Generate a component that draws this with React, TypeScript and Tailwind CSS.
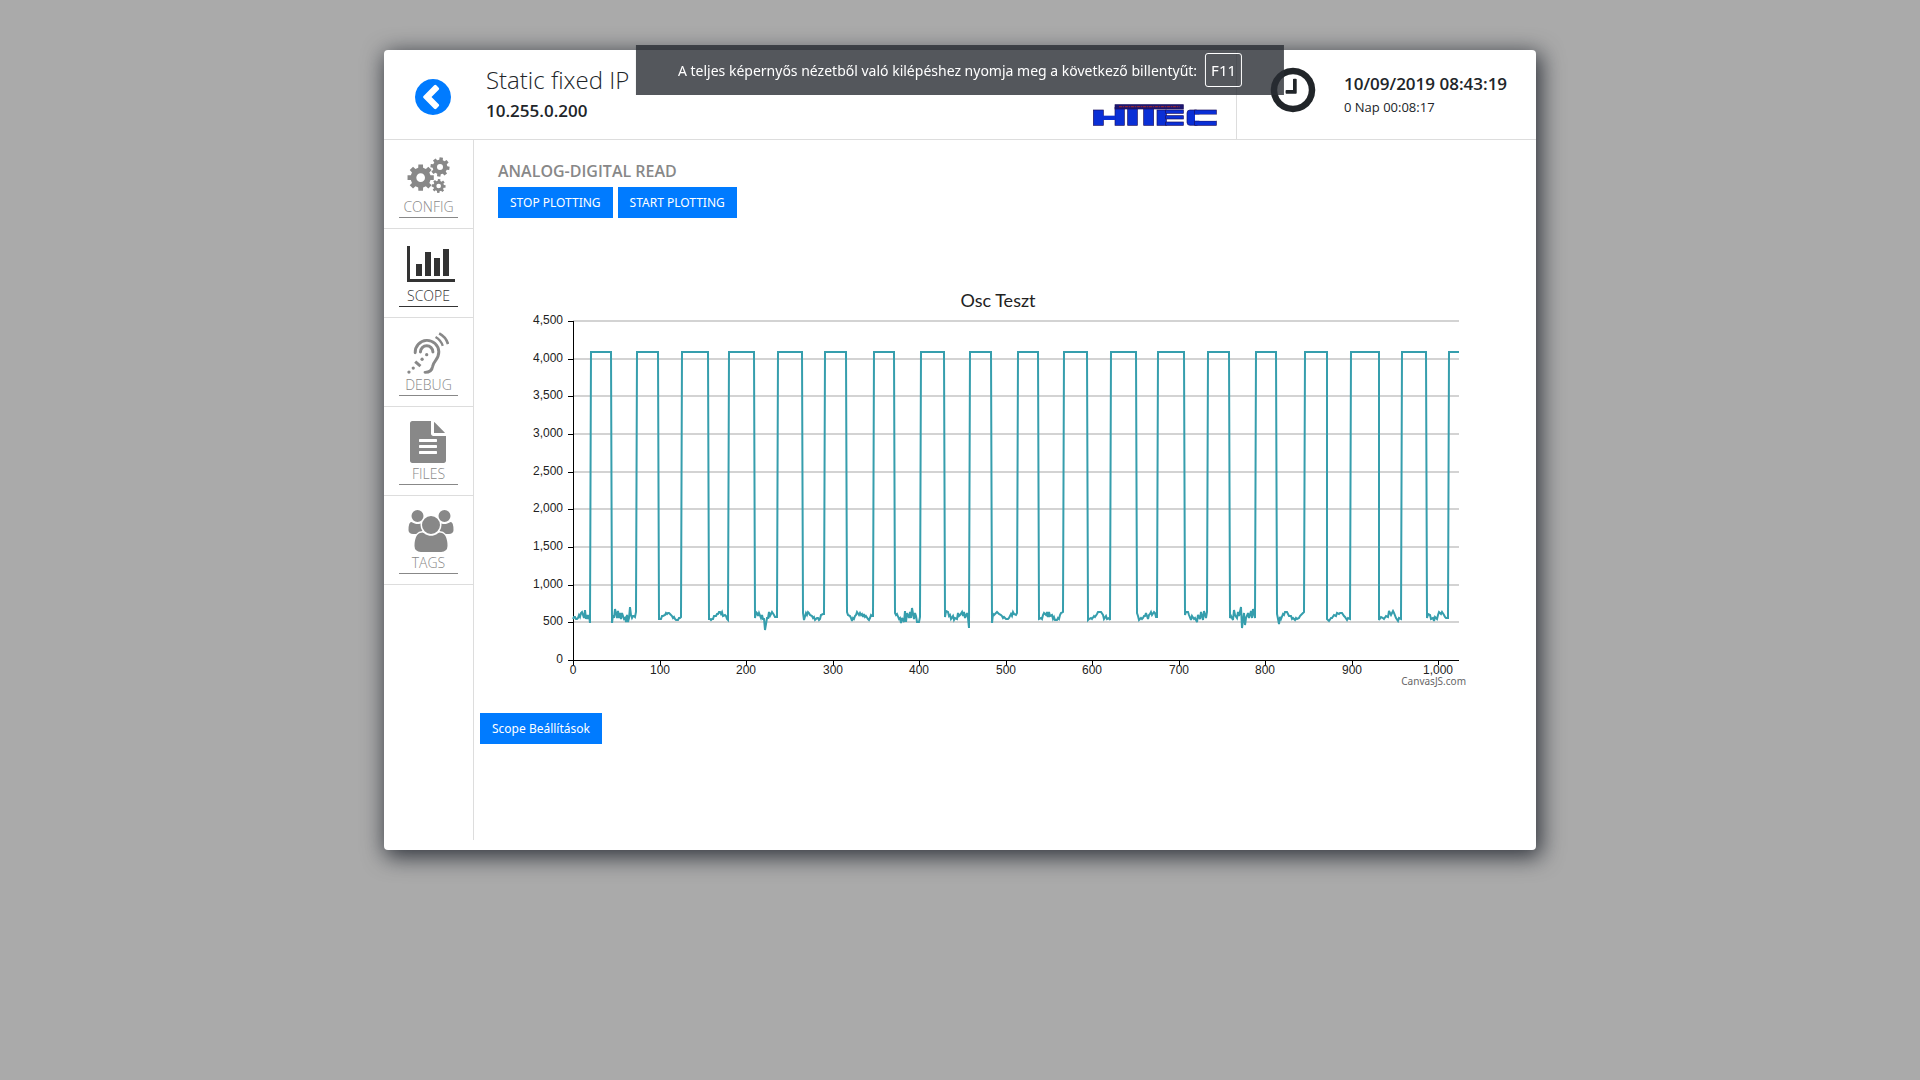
import React from "react";

type GlyphProps = { d: string; width: number; className?: string };

function Glyph({ d, width, className }: GlyphProps) {
  return (
    <svg viewBox={`0 0 ${width} 1792`} className={className} fill="currentColor" aria-hidden="true">
      <path d={d} />
    </svg>
  );
}

const CHEVRON_CIRCLE =
  "M1037 1395l102-102q19-19 19-45t-19-45l-307-307 307-307q19-19 19-45t-19-45l-102-102q-19-19-45-19t-45 19l-454 454q-19 19-19 45t19 45l454 454q19 19 45 19t45-19zm627-499q0 209-103 385.5t-279.5 279.5-385.5 103-385.5-103-279.5-279.5-103-385.5 103-385.5 279.5-279.5 385.5-103 385.5 103 279.5 279.5 103 385.5z";
const CLOCK =
  "M1024 544v448q0 14-9 23t-23 9h-320q-14 0-23-9t-9-23v-64q0-14 9-23t23-9h224v-352q0-14 9-23t23-9h64q14 0 23 9t9 23zm416 352q0-148-73-273t-198-198-273-73-273 73-198 198-73 273 73 273 198 198 273 73 273-73 198-198 73-273zm224 0q0 209-103 385.5t-279.5 279.5-385.5 103-385.5-103-279.5-279.5-103-385.5 103-385.5 279.5-279.5 385.5-103 385.5 103 279.5 279.5 103 385.5z";
const BAR_CHART =
  "M640 896v512h-256v-512h256zm384-512v1024h-256v-1024h256zm1024 1152v128h-2048v-1536h128v1408h1920zm-640-896v768h-256v-768h256zm384-384v1152h-256v-1152h256z";
const FILE_TEXT =
  "M1596 476q14 14 28 36h-472v-472q22 14 36 28zm-476 164h544v1056q0 40-28 68t-68 28h-1344q-40 0-68-28t-28-68v-1600q0-40 28-68t68-28h800v544q0 40 28 68t68 28zm160 736v-64q0-14-9-23t-23-9h-704q-14 0-23 9t-9 23v64q0 14 9 23t23 9h704q14 0 23-9t9-23zm0-256v-64q0-14-9-23t-23-9h-704q-14 0-23 9t-9 23v64q0 14 9 23t23 9h704q14 0 23-9t9-23zm0-256v-64q0-14-9-23t-23-9h-704q-14 0-23 9t-9 23v64q0 14 9 23t23 9h704q14 0 23-9t9-23z";
const USERS =
  "M657 896q-162 5-265 128h-134q-82 0-138-40.5t-56-118.5q0-353 124-353 6 0 43.5 21t97.5 42.5 119 21.5q67 0 133-23-5 37-5 66 0 139 81 256zm1071 637q0 120-73 189.5t-194 69.5h-874q-121 0-194-69.5t-73-189.5q0-53 3.5-103.5t14-109 26.5-108.5 43-97.5 62-81 85.5-53.5 111.5-20q10 0 43 21.5t73 48 107 48 135 21.5 135-21.5 107-48 73-48 43-21.5q61 0 111.5 20t85.5 53.5 62 81 43 97.5 26.5 108.5 14 109 3.5 103.5zm-1024-1277q0 106-75 181t-181 75-181-75-75-181 75-181 181-75 181 75 75 181zm704 384q0 159-112.5 271.5t-271.5 112.5-271.5-112.5-112.5-271.5 112.5-271.5 271.5-112.5 271.5 112.5 112.5 271.5zm576 225q0 78-56 118.5t-138 40.5h-134q-103-123-265-128 81-117 81-256 0-29-5-66 66 23 133 23 59 0 119-21.5t97.5-42.5 43.5-21q124 0 124 353zm-128-609q0 106-75 181t-181 75-181-75-75-181 75-181 181-75 181 75 75 181z";

/* Outline of an eight-toothed gear with a round hole. */
function gearPath(cx: number, cy: number, r: number, hole: number, turn: number) {
  const at = (radius: number, deg: number) => {
    const a = ((deg + turn) * Math.PI) / 180;
    return `${(cx + radius * Math.cos(a)).toFixed(2)} ${(cy + radius * Math.sin(a)).toFixed(2)}`;
  };
  const corners: string[] = [];
  for (let t = 0; t < 8; t++) {
    const mid = t * 45;
    corners.push(at(r * 0.76, mid - 14), at(r, mid - 10), at(r, mid + 10), at(r * 0.76, mid + 14));
  }
  return `M${corners.join("L")}ZM${cx - hole} ${cy}a${hole} ${hole} 0 1 0 ${hole * 2} 0a${hole} ${hole} 0 1 0 ${-hole * 2} 0Z`;
}

function GearsIcon() {
  return (
    <svg viewBox="0 -10 132 126" className="h-[42px] w-11" fill="currentColor" fillRule="evenodd" aria-hidden="true">
      <path d={gearPath(41, 61, 40, 13, 0)} />
      <path d={gearPath(99, 29, 29, 9, 8)} />
      <path d={gearPath(95, 86, 21, 7, 4)} />
    </svg>
  );
}

function ListeningIcon() {
  return (
    <svg viewBox="0 0 128 128" className="size-[42px]" fill="none" stroke="currentColor" strokeWidth="9" aria-hidden="true">
      <path d="M25 63A36 36 0 0 1 97 60C97 85 80 88 78 105C76 118 68 123 55 123" strokeLinecap="round" />
      <path d="M41 61a19 19 0 0 1 38 0" strokeLinecap="round" />
      <path d="M87 15Q103 24 109 42" strokeWidth="7" />
      <path d="M98 4Q119 15 125 37" strokeWidth="8" />
      <path d="M25 90L41 104" />
      <g fill="currentColor" stroke="none">
        <circle cx="6" cy="122" r="5" />
        <circle cx="19" cy="110" r="5" />
        <circle cx="46" cy="83" r="5" />
        <circle cx="60" cy="69" r="5" />
      </g>
    </svg>
  );
}

const NAV: { label: string; icon: React.ReactNode; active?: boolean }[] = [
  { label: "CONFIG", icon: <GearsIcon /> },
  { label: "SCOPE", icon: <Glyph d={BAR_CHART} width={2048} className="h-[42px] w-12" />, active: true },
  { label: "DEBUG", icon: <ListeningIcon /> },
  { label: "FILES", icon: <Glyph d={FILE_TEXT} width={1792} className="size-[42px]" /> },
  { label: "TAGS", icon: <Glyph d={USERS} width={2048} className="h-[42px] w-12" /> },
];

/* Low-level readings between pulses, and the x position where each pulse rises and falls. */
const HIGH = 4095;
const LOWS: number[][] = [
  [545, 575, 575, 540, 540, 560, 600, 575, 620, 640, 600, 560, 660, 660, 540, 600, 540, 600, 490],
  [490, 600, 560, 680, 620, 560, 650, 560, 620, 540, 620, 540, 560, 510, 600, 510, 560, 700, 600, 560, 590, 580, 575, 640],
  [540, 540, 540, 580, 580, 600, 620, 610, 620, 620, 610, 590, 560, 570, 550, 530, 530, 560, 560, 575],
  [550, 550, 530, 550, 545, 590, 580, 610, 610, 635, 640, 610, 640, 590, 600, 580, 550, 530],
  [560, 640, 630, 590, 620, 560, 600, 540, 540, 400, 560, 560, 640, 590, 610, 640, 600, 575, 575, 575],
  [620, 530, 620, 600, 640, 620, 600, 590, 560, 575, 530, 560, 560, 535, 545, 600, 610, 610],
  [640, 600, 580, 560, 520, 560, 550, 580, 600, 640, 600, 620, 600, 610, 570, 610, 570, 580, 540, 530, 560, 600, 590, 580],
  [620, 600, 610, 540, 560, 490, 560, 500, 650, 500, 620, 560, 640, 560, 690, 540, 620, 590, 500, 500, 575],
  [570, 650, 640, 590, 600, 540, 580, 530, 560, 540, 620, 590, 600, 640, 590, 640, 560, 620, 560, 430],
  [490, 610, 600, 620, 640, 630, 610, 600, 580, 560, 570, 545, 550, 550, 560, 610, 590, 640, 610, 600, 620],
  [540, 560, 550, 600, 630, 600, 640, 570, 640, 580, 600, 540, 570, 530, 530, 560, 550, 600, 630, 640],
  [530, 540, 560, 550, 590, 570, 610, 640, 640, 640, 600, 540, 590, 550, 560, 530],
  [620, 590, 530, 560, 540, 560, 590, 580, 620, 550, 600, 610, 640, 600, 640, 620, 570, 575],
  [600, 640, 640, 600, 530, 590, 540, 560, 500, 600, 540, 640, 530, 650, 560, 640],
  [560, 590, 530, 660, 600, 560, 640, 590, 710, 430, 620, 470, 560, 620, 560, 650, 560, 680, 560],
  [610, 480, 570, 550, 610, 600, 640, 640, 610, 590, 580, 550, 560, 530, 560, 550, 560, 590, 600, 630, 640],
  [550, 520, 560, 560, 600, 580, 630, 610, 630, 620, 580, 570, 530, 560, 550],
  [530, 570, 560, 550, 590, 570, 650, 600, 650, 620, 560, 520, 560, 550],
  [560, 610, 600, 540, 560, 520, 570, 550, 600, 640, 610, 640, 600, 570, 560, 560],
];
const PULSES: [number, number][] = [
  [21, 44], [74, 98], [126, 156], [180, 209], [237, 265], [291, 316], [348, 371], [402, 429], [459, 483],
  [514, 538], [567, 594], [622, 651], [676, 706], [734, 758], [789, 813], [846, 871], [899, 931], [958, 986], [1012, 1024],
];

/* Plot area inside the drawing: x 63..949, y 41..380. */
const px = (v: number) => 63 + (v * 886) / 1024;
const py = (v: number) => 380 - (v * 339) / 4500;

function tracePoints() {
  const points: string[] = [];
  let start = 0;
  const add = (x: number, y: number) => points.push(`${Math.round(px(x))},${Math.round(py(y))}`);
  LOWS.forEach((readings, i) => {
    const [rise, fall] = PULSES[i];
    const end = rise - 1;
    readings.forEach((reading, j) => add(start + ((end - start) * j) / (readings.length - 1), reading));
    add(rise, HIGH);
    add(fall, HIGH);
    start = fall + 1;
  });
  return points.join(" ");
}

function ScopeChart() {
  const levels = [0, 500, 1000, 1500, 2000, 2500, 3000, 3500, 4000, 4500];
  const samples = [0, 100, 200, 300, 400, 500, 600, 700, 800, 900, 1000];
  return (
    <svg viewBox="0 0 976 413" className="block w-full" role="img" aria-label="Osc Teszt">
      <text x="488" y="27" textAnchor="middle" className="fill-[#222] font-['Lato'] text-[18px]">
        Osc Teszt
      </text>
      {levels.map((v) => (
        <g key={v}>
          {v > 0 && <line x1="63" x2="949" y1={Math.round(py(v))} y2={Math.round(py(v))} stroke="#d3d3d3" strokeWidth="2" />}
          <line x1="58" x2="63" y1={Math.round(py(v)) + 0.5} y2={Math.round(py(v)) + 0.5} stroke="#000" />
          <text x="53" y={Math.round(py(v)) + 3} textAnchor="end" className="fill-[#222] font-['Liberation_Sans'] text-[12px]">
            {v.toLocaleString("en-US")}
          </text>
        </g>
      ))}
      {samples.map((v) => (
        <g key={v}>
          <line x1={Math.round(px(v)) + 0.5} x2={Math.round(px(v)) + 0.5} y1="380" y2="385" stroke="#000" />
          <text x={Math.round(px(v))} y="394" textAnchor="middle" className="fill-[#222] font-['Liberation_Sans'] text-[12px]">
            {v.toLocaleString("en-US")}
          </text>
        </g>
      ))}
      <line x1="63.5" x2="63.5" y1="41" y2="380" stroke="#000" />
      <line x1="63" x2="949" y1="380.5" y2="380.5" stroke="#000" />
      <polyline points={tracePoints()} fill="none" stroke="#369ead" strokeWidth="2" strokeLinejoin="miter" strokeMiterlimit="3" />
      <text x="956" y="405" textAnchor="end" className="fill-[#666] font-['Noto_Sans'] text-[10px]">
        CanvasJS.com
      </text>
    </svg>
  );
}

function HitecLogo() {
  return (
    <svg viewBox="0 0 372 66" className="h-[22px] w-[124px]" role="img" aria-label="HITEC">
      <g fill="#0a2fd6" stroke="#1b1060" strokeWidth="2">
        <rect x="1" y="18" width="30" height="46" />
        <rect x="66" y="10" width="28" height="54" />
        <rect x="29" y="35" width="39" height="13" stroke="none" />
        <rect x="104" y="10" width="29" height="54" />
        <rect x="152" y="10" width="30" height="54" />
        <rect x="192" y="18" width="28" height="46" />
        <rect x="218" y="18" width="53" height="10" />
        <rect x="218" y="35" width="53" height="10" />
        <rect x="218" y="54" width="53" height="10" />
        <rect x="282" y="18" width="36" height="46" rx="9" />
        <rect x="305" y="18" width="65" height="13" />
        <rect x="305" y="51" width="65" height="13" />
        <rect x="306" y="32" width="64" height="18" fill="#fff" stroke="none" />
        <rect x="66" y="2" width="205" height="13" fill="#1c1670" />
      </g>
      <line x1="78" x2="260" y1="8" y2="8" stroke="#8c2434" strokeWidth="4" strokeDasharray="9 2 5 2" />
    </svg>
  );
}

const BTN =
  "bg-[#007bff] px-3 pt-px font-['Noto_Sans'] text-[12px] leading-[30px] text-white hover:bg-blue-700";

export default function App() {
  return (
    <div className="min-h-screen bg-[#aaaaaa] pt-[50px] font-['Open_Sans','Noto_Sans',sans-serif] text-[#212529]">
      <div className="mx-auto flex min-h-[800px] w-3/5 flex-col rounded bg-white pb-[10px] shadow-[3px_5px_22px_2px_rgba(10,15,25,0.75)]">
        <header className="flex h-[90px] border-b border-[#dddddd]">
          <button aria-label="Vissza" className="ml-[28px] mt-[5px] w-[42px] text-[#007bff]">
            <Glyph d={CHEVRON_CIRCLE} width={1792} className="size-[42px]" />
          </button>
          <div className="ml-8 mt-[15px]">
            <h1 className="text-[24px] leading-[30px] font-light">Static fixed IP</h1>
            <p className="text-[17px] leading-8 font-semibold">10.255.0.200</p>
          </div>
          <div className="ml-auto flex items-end pr-[19px] pb-[13px]">
            <HitecLogo />
          </div>
          <div className="flex w-[300px] border-l border-[#dddddd]">
            <Glyph d={CLOCK} width={1792} className="mt-[14px] ml-[30px] size-[52px]" />
            <div className="mt-[22px] ml-[25px]">
              <p className="text-[17px] leading-6 font-semibold">10/09/2019 08:43:19</p>
              <p className="text-[13px] leading-[22px]">0 Nap 00:08:17</p>
            </div>
          </div>
        </header>

        <div className="flex flex-1">
          <nav className="w-[90px] shrink-0 border-r border-[#dddddd]">
            {NAV.map((item) => (
              <a
                key={item.label}
                href={`#${item.label.toLowerCase()}`}
                className={`flex h-[89px] flex-col border-b border-[#dddddd] px-[15px] pt-[14px] ${item.active ? "text-[#333333]" : "text-[#888888]"}`}
              >
                <span className="flex h-[43px] pl-2">
                  <span className="shrink-0">{item.icon}</span>
                </span>
                <span className="border-b border-current text-center text-[14px] leading-[20px] font-light">{item.label}</span>
              </a>
            ))}
          </nav>

          <main className="flex-1 pt-5">
            <section className="px-6">
              <h2 className="text-[16px] leading-[22px] font-semibold text-[#888888]">ANALOG-DIGITAL READ</h2>
              <div className="mt-[5px] flex gap-[5px]">
                <button className={BTN}>STOP PLOTTING</button>
                <button className={BTN}>START PLOTTING</button>
              </div>
            </section>
            <section className="mt-[62px] pr-[50px] pl-9">
              <ScopeChart />
            </section>
            <div className="mt-5 pl-[6px]">
              <button className={BTN}>Scope Beállítások</button>
            </div>
          </main>
        </div>
      </div>

      <div
        role="status"
        className="fixed top-[45px] left-1/2 flex h-[50px] -translate-x-1/2 items-center gap-2 bg-[#292d33]/80 px-[42px] font-['Noto_Sans'] text-[14px] whitespace-nowrap text-white"
      >
        <span>A teljes képernyős nézetből való kilépéshez nyomja meg a következő billentyűt:</span>
        <kbd className="rounded-[3px] border border-white px-[5px] font-['Noto_Sans'] text-[15px] leading-8">F11</kbd>
      </div>
    </div>
  );
}
